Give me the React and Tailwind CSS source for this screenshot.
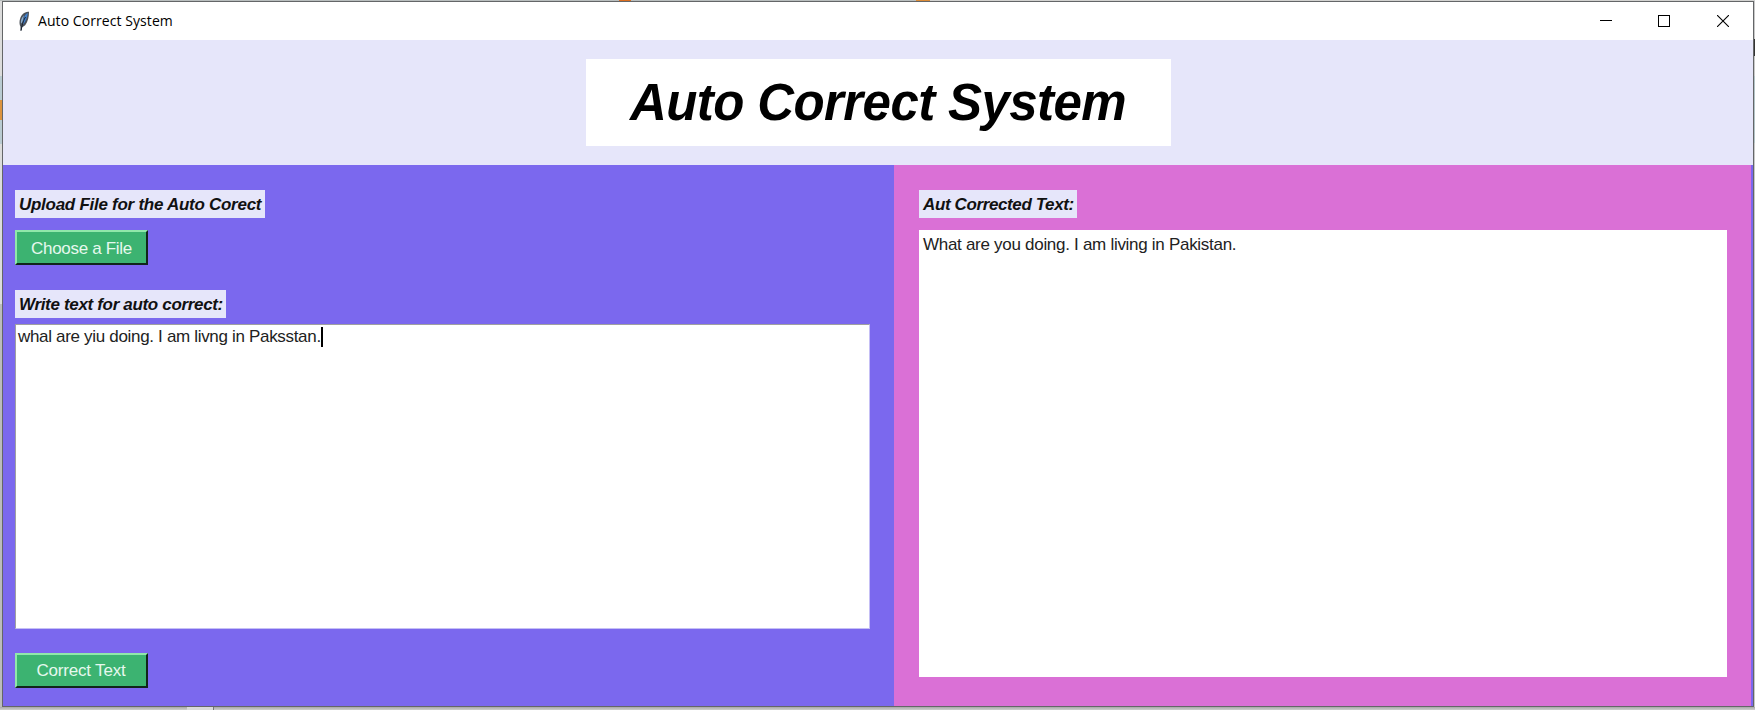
import React from "react";

function Feather() {
  return (
    <svg width="13" height="21" viewBox="0 0 13 21" className="shrink-0">
      <path d="M3.6 20 3.4 15.5C1.8 12.5 2.4 7 5.4 3.6 7.4 1.3 9.8.5 12 .8 12 6 11 10.6 8.2 14.2L5.2 16.2 4.6 19.5Z" fill="#4a5058" />
      <path d="M4 12.5C3.4 10 4.6 6.5 6.9 4.2L5.3 11.5Z" fill="#8fb0cf" />
      <path d="M6 13.5C8.6 11 10.2 6.8 10.9 2 8.8 2.6 7.2 5 6.4 8Z" fill="#3f80cf" />
      <path d="M8.5 6C7 8.5 5.4 12 4 19.5" fill="none" stroke="#152030" strokeWidth="1" />
    </svg>
  );
}

function TitleBar() {
  return (
    <div className="flex h-[38px] shrink-0 items-center bg-white pl-[14px]">
      <Feather />
      <span className="ml-[8px] grow font-['Open_Sans',sans-serif] text-[14px] leading-[20px] tracking-[0.07px] text-black">Auto Correct System</span>
      <div className="flex items-center pr-[24px]">
        <svg width="12" height="12" shapeRendering="crispEdges"><path d="M0 5.5H12" stroke="#000" /></svg>
        <svg width="12" height="12" className="ml-[46px]" shapeRendering="crispEdges"><rect x=".5" y=".5" width="11" height="11" fill="none" stroke="#000" /></svg>
        <svg width="12" height="12" className="ml-[47px]"><path d="M0 0 12 12M12 0 0 12" stroke="#000" strokeWidth="1.1" /></svg>
      </div>
    </div>
  );
}

function Label({ children, className }) {
  return (
    <div className={`flex h-[28px] items-center whitespace-nowrap bg-[#e6e6fa] pl-[4px] pt-px text-[17px] font-bold italic text-[#111] ${className}`}>
      {children}
    </div>
  );
}

function Button({ children, className }) {
  return (
    <button className={`flex h-[35px] w-[133px] items-center justify-center whitespace-nowrap border-2 border-t-[#90e8aa] border-l-[#90e8aa] border-r-[#10251a] border-b-[#10251a] bg-[#3cb371] text-[17px] text-[#e6f8ee] ${className}`}>
      {children}
    </button>
  );
}

export default function App() {
  return (
    <div className="flex h-[710px] w-[1755px] flex-col overflow-hidden bg-[#cdcdcd] font-['Liberation_Sans',Arial,sans-serif]">
      <div className="flex h-px shrink-0 bg-[#b9bebe]">
        <div className="ml-[619px] w-[12px] bg-[#dc6e20]" />
        <div className="ml-[285px] w-[14px] bg-[#dc8c38]" />
        <div className="grow bg-[#d2d2d0]" />
      </div>
      <div className="flex h-[706px] shrink-0">
        <div className="flex w-[2px] shrink-0 flex-col bg-[#dcdcdc]">
          <div className="mt-[75px] h-[24px] bg-[#bacbd1]" />
          <div className="h-[20px] bg-[#dc9440]" />
          <div className="h-[24px] bg-[#bacbd1]" />
          <div className="mt-[160px] grow bg-[#bcbcbc]" />
        </div>
        <main className="flex w-[1752px] shrink-0 flex-col border border-[#646668] bg-[#7b68ee]">
          <TitleBar />
          <header className="flex h-[125px] shrink-0 justify-center bg-[#e6e6fa] pt-[19px]">
            <h1 className="flex h-[87px] w-[585px] items-center justify-center whitespace-nowrap bg-white text-[51px] font-bold italic leading-none tracking-[-0.6px] text-black">
              Auto Correct System
            </h1>
          </header>
          <div className="flex grow">
            <section className="flex w-[891px] shrink-0 flex-col items-start pl-[12px] pt-[25px]">
              <Label className="w-[250px] tracking-[-0.27px]">Upload File for the Auto Corect</Label>
              <Button className="mt-[12px] pt-[2px] tracking-[-0.31px]">Choose a File</Button>
              <Label className="mt-[25px] w-[211px] tracking-[-0.33px]">Write text for auto correct:</Label>
              <div className="mt-[6px] flex h-[305px] w-[855px] items-start border border-[#c5bff5] border-t-[#a0a0a0] border-l-[#a0a0a0] bg-white pl-[2px] pt-[2px] text-[17px] leading-[20px] text-[#222]">
                <span className="whitespace-nowrap tracking-[-0.32px]">whal are yiu doing. I am livng in Paksstan.</span>
                <span className="h-[20px] w-[2px] shrink-0 bg-black" />
              </div>
              <Button className="mt-[24px] pr-px tracking-[-0.2px]">Correct Text</Button>
            </section>
            <section className="flex w-[857px] shrink-0 flex-col items-start bg-[#da70d6] pl-[25px] pt-[25px]">
              <Label className="w-[158px] tracking-[-0.38px]">Aut Corrected Text:</Label>
              <div className="mt-[12px] h-[447px] w-[808px] whitespace-nowrap bg-white pl-[4px] pt-[5px] text-[17px] leading-[20px] tracking-[-0.29px] text-[#222]">
                What are you doing. I am living in Pakistan.
              </div>
            </section>
          </div>
        </main>
        <div className="flex grow flex-col bg-[#c8c8c8]">
          <div className="mt-[38px] h-[17px] bg-[#333]" />
          <div className="mt-[20px] h-[67px] bg-[#b3c3c7]" />
        </div>
      </div>
      <div className="flex grow bg-gradient-to-b from-[#a8a8a8] to-[#cfcfcf]">
        <div className="ml-[187px] w-[26px] bg-[#dadada]" />
        <div className="w-px bg-[#777]" />
      </div>
    </div>
  );
}
